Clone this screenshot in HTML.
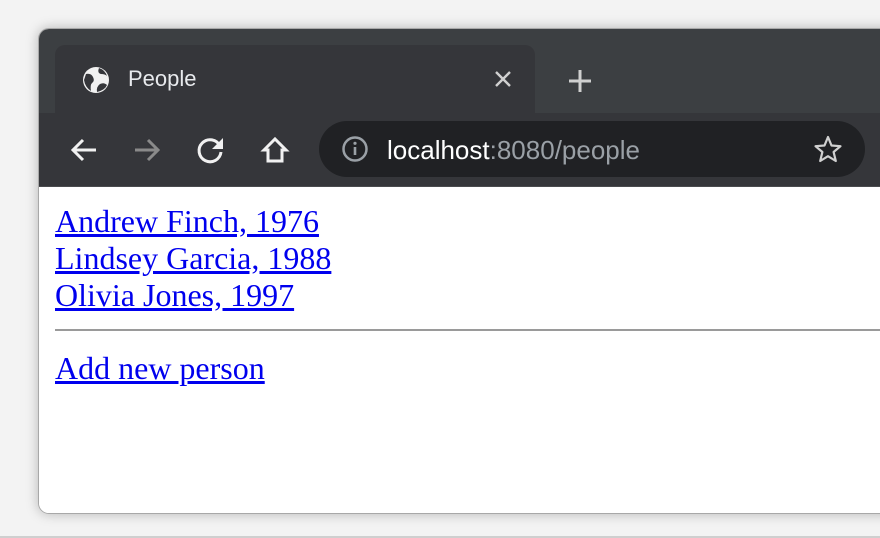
<!DOCTYPE html>
<html><head><meta charset="utf-8"><style>
html,body{margin:0;padding:0;width:880px;height:538px;overflow:hidden;background:#f3f3f3;}
.win{position:absolute;left:38px;top:28px;width:900px;height:486px;border-radius:11px;overflow:hidden;background:#fff;box-shadow:0 0 12px rgba(0,0,0,.25);border:1px solid #a8a8a8;box-sizing:border-box;}
.title{position:absolute;left:0;top:0;right:0;height:85px;background:#3c3f42;}
.tab{position:absolute;left:16px;top:16px;width:480px;height:70px;background:#35363a;border-radius:10px 10px 0 0;}
.tb{position:absolute;left:0;top:84px;right:0;height:73px;background:#35363a;border-bottom:1px solid #4a4b4e;}
.omni{position:absolute;left:280px;top:8px;width:546px;height:56px;border-radius:28px;background:#202124;}
.ui{font-family:"Liberation Sans",sans-serif;position:absolute;}
.content{position:absolute;left:0;top:158px;right:0;bottom:0;background:#fff;}
a{color:#0000ee;font-family:"Liberation Serif",serif;font-size:32px;line-height:37px;}
hr{position:absolute;left:16px;top:142px;width:900px;margin:0;border:0;border-top:2px solid #9a9a9a;height:0;}
.bot{position:absolute;left:0;right:0;top:536px;height:2px;background:#cfcfcf;}
</style></head><body>
<div class="bot"></div>
<div class="win">
 <div class="title"></div>
 <div class="tab">
  <svg class="ui" style="left:26px;top:20px" width="30" height="30" viewBox="0 0 30 30"><circle cx="15" cy="15" r="13" fill="#f1f1f1"/><path d="M5 9 Q10 8 12 12 Q14 16 11 18 Q9 20 10 26 Q4 22 3 15Z M18 3 Q16 8 20 9 Q24 9 26 11 Q24 5 18 3Z M16 27 Q15 22 19 19 Q23 17 26 20 Q24 25 16 27Z" fill="#35363a"/></svg>
  <div class="ui" style="left:73px;top:21px;font-size:22px;color:#e8eaed">People</div>
  <svg class="ui" style="left:438px;top:24px" width="20" height="20" viewBox="0 0 20 20"><path d="M3 3L17 17M17 3L3 17" stroke="#d0d0d0" stroke-width="2.4"/></svg>
 </div>
 <svg class="ui" style="left:528px;top:39px" width="26" height="26" viewBox="0 0 26 26"><path d="M13 2V24M2 13H24" stroke="#d0d0d0" stroke-width="3"/></svg>
 <div class="tb">
  <svg class="ui" style="left:30px;top:22px" width="30" height="30" viewBox="0 0 30 30"><path d="M27 15H5M14 5L4 15L14 25" stroke="#f1f1f1" stroke-width="3" fill="none"/></svg>
  <svg class="ui" style="left:93px;top:22px" width="30" height="30" viewBox="0 0 30 30"><path d="M3 15H25M16 5L26 15L16 25" stroke="#8a8a8a" stroke-width="3" fill="none"/></svg>
  <svg class="ui" style="left:157px;top:22px" width="30" height="30" viewBox="0 0 30 30"><path d="M24 11A11 11 0 1 0 25 17" stroke="#f1f1f1" stroke-width="3" fill="none"/><path d="M27 3V14H16Z" fill="#f1f1f1"/></svg>
  <svg class="ui" style="left:221px;top:22px" width="30" height="30" viewBox="0 0 30 30"><path d="M4 15L15 4L26 15H22V26H8V15Z" stroke="#f1f1f1" stroke-width="3" fill="none" stroke-linejoin="miter"/></svg>
  <div class="omni">
   <svg class="ui" style="left:22px;top:14px" width="28" height="28" viewBox="0 0 28 28"><circle cx="14" cy="14" r="11.5" stroke="#9aa0a6" stroke-width="2.5" fill="none"/><path d="M14 12V20" stroke="#9aa0a6" stroke-width="2.6"/><circle cx="14" cy="8.3" r="1.6" fill="#9aa0a6"/></svg>
   <div class="ui" style="left:68px;top:14px;font-size:26px;color:#fff">localhost<span style="color:#9aa0a6">:8080/people</span></div>
   <svg class="ui" style="left:494px;top:13px" width="30" height="30" viewBox="0 0 30 30"><path d="M15 3L18.5 11.5L27.5 12.2L20.6 18L22.8 27L15 22.2L7.2 27L9.4 18L2.5 12.2L11.5 11.5Z" stroke="#d0d0d0" stroke-width="2.2" fill="none" stroke-linejoin="round"/></svg>
  </div>
 </div>
 <div class="content">
  <div style="position:absolute;left:16px;top:16px">
   <a href="#">Andrew Finch, 1976</a><br><a href="#">Lindsey Garcia, 1988</a><br><a href="#">Olivia Jones, 1997</a>
  </div>
  <hr>
  <div style="position:absolute;left:16px;top:163px"><a href="#">Add new person</a></div>
 </div>
</div>
</body></html>
